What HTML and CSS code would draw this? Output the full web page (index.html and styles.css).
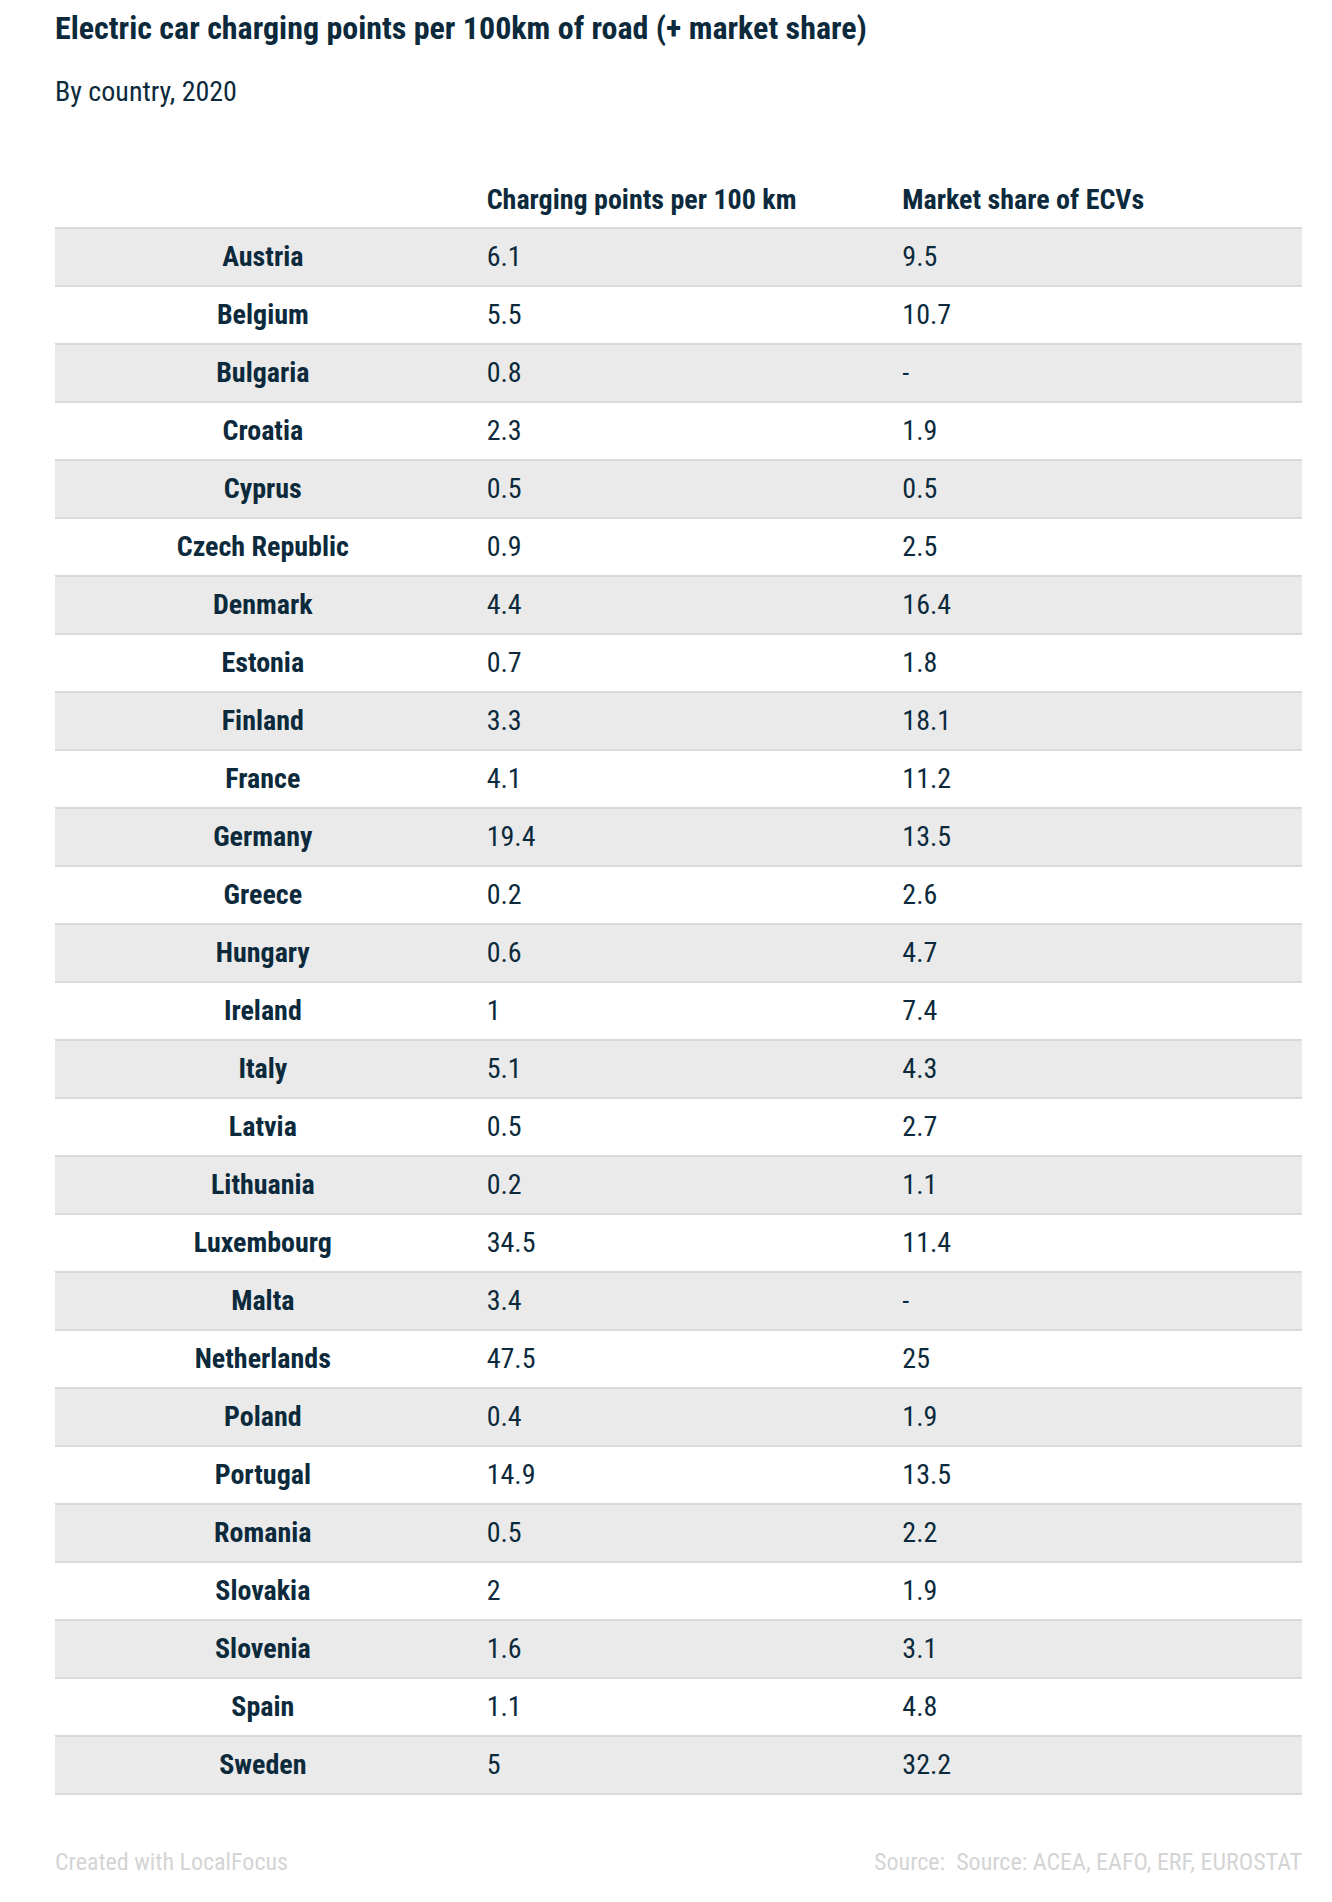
FILE: index.html
```html
<!DOCTYPE html>
<html lang="en">
<head>
<meta charset="utf-8">
<title>Electric car charging points per 100km of road</title>
<link rel="stylesheet" href="styles.css">
</head>
<body>
<div class="chart">
  <h1 class="title">Electric car charging points per 100km of road (+ market share)</h1>
  <p class="subtitle">By country, 2020</p>
  <table class="data">
    <thead>
      <tr><th class="country"></th><th>Charging points per 100 km</th><th>Market share of ECVs</th></tr>
    </thead>
    <tbody>
      <tr><th class="country">Austria</th><td>6.1</td><td>9.5</td></tr>
      <tr><th class="country">Belgium</th><td>5.5</td><td>10.7</td></tr>
      <tr><th class="country">Bulgaria</th><td>0.8</td><td>-</td></tr>
      <tr><th class="country">Croatia</th><td>2.3</td><td>1.9</td></tr>
      <tr><th class="country">Cyprus</th><td>0.5</td><td>0.5</td></tr>
      <tr><th class="country">Czech Republic</th><td>0.9</td><td>2.5</td></tr>
      <tr><th class="country">Denmark</th><td>4.4</td><td>16.4</td></tr>
      <tr><th class="country">Estonia</th><td>0.7</td><td>1.8</td></tr>
      <tr><th class="country">Finland</th><td>3.3</td><td>18.1</td></tr>
      <tr><th class="country">France</th><td>4.1</td><td>11.2</td></tr>
      <tr><th class="country">Germany</th><td>19.4</td><td>13.5</td></tr>
      <tr><th class="country">Greece</th><td>0.2</td><td>2.6</td></tr>
      <tr><th class="country">Hungary</th><td>0.6</td><td>4.7</td></tr>
      <tr><th class="country">Ireland</th><td>1</td><td>7.4</td></tr>
      <tr><th class="country">Italy</th><td>5.1</td><td>4.3</td></tr>
      <tr><th class="country">Latvia</th><td>0.5</td><td>2.7</td></tr>
      <tr><th class="country">Lithuania</th><td>0.2</td><td>1.1</td></tr>
      <tr><th class="country">Luxembourg</th><td>34.5</td><td>11.4</td></tr>
      <tr><th class="country">Malta</th><td>3.4</td><td>-</td></tr>
      <tr><th class="country">Netherlands</th><td>47.5</td><td>25</td></tr>
      <tr><th class="country">Poland</th><td>0.4</td><td>1.9</td></tr>
      <tr><th class="country">Portugal</th><td>14.9</td><td>13.5</td></tr>
      <tr><th class="country">Romania</th><td>0.5</td><td>2.2</td></tr>
      <tr><th class="country">Slovakia</th><td>2</td><td>1.9</td></tr>
      <tr><th class="country">Slovenia</th><td>1.6</td><td>3.1</td></tr>
      <tr><th class="country">Spain</th><td>1.1</td><td>4.8</td></tr>
      <tr><th class="country">Sweden</th><td>5</td><td>32.2</td></tr>
    </tbody>
  </table>
  <div class="footer">
    <span class="credit">Created with LocalFocus</span>
    <span class="source">Source:&nbsp; Source: ACEA, EAFO, ERF, EUROSTAT</span>
  </div>
</div>
</body>
</html>
```

FILE: styles.css
```css
html, body {
  margin: 0;
  padding: 0;
  background: #ffffff;
}

body {
  font-family: "Roboto Condensed", "Roboto", "Liberation Sans Narrow", sans-serif;
  font-stretch: 75%;
  color: #0c2a3c;
}

.chart {
  padding: 10px 30px 0 55px;
}

.title {
  margin: 0;
  font-size: 32px;
  line-height: 36px;
  font-weight: 700;
}

.subtitle {
  margin: 30px 0 0 0;
  font-size: 28px;
  line-height: 32px;
  font-weight: 400;
}

.data {
  width: 100%;
  margin-top: 76px;
  border-collapse: collapse;
  table-layout: fixed;
  font-size: 28px;
}

.data thead th {
  text-align: left;
  font-weight: 700;
  padding: 0 16px 11px 16px;
  line-height: 32px;
  vertical-align: bottom;
}

.data tbody tr {
  height: 58px;
  border-top: 2px solid #d9d9d9;
}

.data tbody tr:last-child {
  border-bottom: 2px solid #d9d9d9;
}

.data tbody tr:nth-child(odd) {
  background: #eaeaea;
}

.data tbody th,
.data tbody td {
  padding: 0 16px;
  line-height: 32px;
  vertical-align: middle;
}

.data tbody th {
  font-weight: 700;
  text-align: center;
}

.data tbody td {
  font-weight: 400;
  text-align: left;
}

.footer {
  display: flex;
  justify-content: space-between;
  margin-top: 53px;
  font-size: 24px;
  line-height: 28px;
  color: #d4d4d4;
}
```
